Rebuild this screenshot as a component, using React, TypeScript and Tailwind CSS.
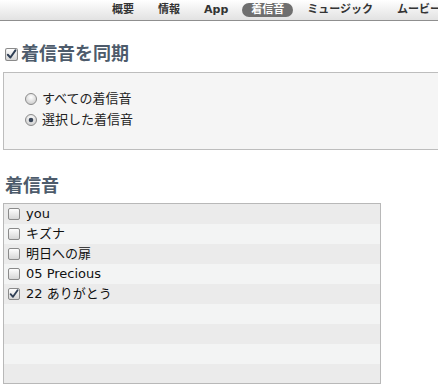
import React from 'react';

const font = { fontFamily: '"DejaVu Sans", "Noto Sans CJK JP", sans-serif' };

const tabs = ['概要', '情報', 'App', '着信音', 'ミュージック', 'ムービー'];

const ringtones = [
  { name: 'you', checked: false },
  { name: 'キズナ', checked: false },
  { name: '明日への扉', checked: false },
  { name: '05 Precious', checked: false },
  { name: '22 ありがとう', checked: true },
];

const Checkbox: React.FC<{ checked: boolean; size?: number }> = ({ checked, size = 12 }) => (
  <svg width={size} height={size} viewBox="0 0 12 12" className="shrink-0">
    <defs>
      <linearGradient id="cbg" x1="0" y1="0" x2="0" y2="1">
        <stop offset="0" stopColor="#ffffff" />
        <stop offset="1" stopColor="#d4d4d4" />
      </linearGradient>
    </defs>
    <rect x="0.5" y="0.5" width="11" height="11" rx="1.5" fill="url(#cbg)" stroke="#8a8a8a" />
    {checked && (
      <path d="M2.6 6.2 L5 8.8 L9.6 2.2" fill="none" stroke="#2f3f55" strokeWidth="1.8" strokeLinecap="round" strokeLinejoin="round" />
    )}
  </svg>
);

const Radio: React.FC<{ selected: boolean }> = ({ selected }) => (
  <svg width="12" height="12" viewBox="0 0 12 12" className="shrink-0">
    <defs>
      <radialGradient id="rg" cx="0.5" cy="0.35" r="0.6">
        <stop offset="0" stopColor="#ffffff" />
        <stop offset="1" stopColor="#cfcfcf" />
      </radialGradient>
    </defs>
    <circle cx="6" cy="6" r="5.5" fill="url(#rg)" stroke="#8c8c8c" />
    {selected && <circle cx="6" cy="6" r="2.3" fill="#3a4658" />}
  </svg>
);

export default function App() {
  return (
    <div className="w-[438px] h-[385px] bg-white overflow-hidden" style={font}>
      {/* タブバー */}
      <div className="h-[21px] bg-gradient-to-b from-white to-[#e2e2e2] border-b border-[#8f8f8f] flex items-center pl-[112px] gap-[24px] whitespace-nowrap overflow-hidden">
        {tabs.map((t) =>
          t === '着信音' ? (
            <span
              key={t}
              className="-mx-[10px] px-[9px] h-[14px] leading-[14px] rounded-full bg-[#6f6f6f] text-white text-[11px] font-bold"
            >
              {t}
            </span>
          ) : (
            <span key={t} className="text-[11px] font-bold text-[#333]">
              {t}
            </span>
          )
        )}
      </div>

      {/* 同期 */}
      <div className="pl-[5px] pt-[22px] flex items-center gap-[3px]">
        <Checkbox checked size={13} />
        <h2 className="text-[18px] font-bold text-[#4d5b6b] leading-[22px]">着信音を同期</h2>
      </div>

      <div className="mt-[7px] ml-[3px] h-[78px] bg-[#f5f5f5] border-y border-l border-[#bdbdbd] pl-[21px] pt-[18px] flex flex-col gap-[5px]">
        <label className="flex items-center gap-[5px] text-[13px] text-[#222] leading-[16px]">
          <Radio selected={false} />
          すべての着信音
        </label>
        <label className="flex items-center gap-[5px] text-[13px] text-[#222] leading-[16px]">
          <Radio selected />
          選択した着信音
        </label>
      </div>

      {/* 着信音リスト */}
      <h2 className="mt-[25px] pl-[5px] text-[18px] font-bold text-[#4d5b6b] leading-[22px]">着信音</h2>

      <div className="mt-[6px] ml-[3px] w-[378px] h-[181px] border border-[#b8b8b8] overflow-hidden">
        {Array.from({ length: 9 }).map((_, i) => {
          const item = ringtones[i];
          return (
            <div
              key={i}
              className={`h-[20px] flex items-center gap-[6px] pl-[4px] ${i % 2 === 0 ? 'bg-[#ebebeb]' : 'bg-[#f3f4f4]'}`}
            >
              {item && (
                <>
                  <Checkbox checked={item.checked} />
                  <span className="text-[13px] text-[#111]">{item.name}</span>
                </>
              )}
            </div>
          );
        })}
      </div>
    </div>
  );
}
